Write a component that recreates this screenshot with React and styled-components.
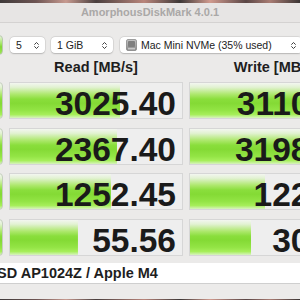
import React from 'react';
import styled, { createGlobalStyle } from 'styled-components';
import { ChevronsUpDown } from 'lucide-react';

const GlobalStyle = createGlobalStyle`
  html, body {
    margin: 0;
    padding: 0;
  }
  body {
    background: #6b4f4a;
    font-family: "Liberation Sans", Arial, sans-serif;
  }
`;

const Screen = styled.div`
  width: 300px;
  height: 300px;
  overflow: hidden;
  display: flex;
  flex-direction: column;
  background: #ebeae9;
`;

const DesktopStrip = styled.div`
  height: ${(p) => p.$h}px;
  flex-shrink: 0;
  background: linear-gradient(90deg, #3f3a3a 0%, #6d5452 12%, #c79a90 22%, #4a3f3e 32%, #b9857b 48%, #3e3837 60%, #d09a8e 70%, #5a4645 82%, #a97c73 90%, #3b3534 100%);
`;

const Window = styled.div`
  width: 440px;
  margin-left: -70px;
  flex: 1;
  display: flex;
  flex-direction: column;
  background: #ebeae9;
`;

const TitleBar = styled.div`
  height: 20px;
  box-sizing: border-box;
  border-bottom: 1px solid #d4d2d1;
  background: #e7e5e4;
  display: flex;
  align-items: center;
  justify-content: center;
  padding-bottom: 2px;
  font-size: 11px;
  font-weight: 700;
  color: #aaa8a7;
`;

const Toolbar = styled.div`
  height: 33px;
  box-sizing: border-box;
  padding: 12px 0 0 10px;
  display: flex;
  align-items: flex-start;
`;

const AllButton = styled.div`
  width: 63px;
  height: 20px;
  box-sizing: border-box;
  border: 1px solid #b9c9ae;
  border-radius: 4px;
  background: linear-gradient(180deg, #e9f5de 0%, #a7e76a 40%, #84d737 60%, #9be851 100%);
  color: #fff;
  font-size: 11px;
  font-weight: 700;
  display: flex;
  align-items: center;
  justify-content: center;
  margin-right: 7px;
`;

const Select = styled.div`
  width: ${(p) => p.$w}px;
  height: 16px;
  margin-top: 2px;
  margin-right: ${(p) => p.$gap || 0}px;
  box-sizing: border-box;
  padding: 0 4px 0 6px;
  background: #fff;
  border-radius: 4px;
  box-shadow: 0 0 0 0.5px rgba(0, 0, 0, 0.1), 0 0.5px 1.5px rgba(0, 0, 0, 0.18);
  display: flex;
  align-items: center;
  font-size: 10.5px;
  color: #222;
`;

const SelectText = styled.span`
  flex: 1;
  display: flex;
  align-items: center;
  gap: 4px;
  white-space: nowrap;
`;

const Columns = styled.div`
  display: grid;
  grid-template-columns: 63px 174px 174px;
  column-gap: 6px;
  padding-left: 10px;
`;

const HeaderRow = styled(Columns)`
  height: 26px;
`;

const HeaderCell = styled.div`
  text-align: center;
  font-size: 14.5px;
  font-weight: 700;
  line-height: 23px;
  color: #1e1e1e;
`;

const Rows = styled(Columns)`
  grid-auto-rows: 37px;
  row-gap: 8.5px;
`;

const barGradient = `linear-gradient(180deg, #f3f6f0 0%, #e2f2d2 12%, #aee86e 32%, #8ade3c 46%, #84da35 58%, #93e445 78%, #a6ee5a 90%, #d8f3c0 100%)`;

const Label = styled.div`
  box-sizing: border-box;
  border: 1px solid #c4cfbd;
  border-radius: 4px;
  background: ${barGradient};
  color: #fff;
  font-size: 11px;
  font-weight: 700;
  line-height: 13px;
  display: flex;
  align-items: center;
  justify-content: center;
  text-align: center;
`;

const Cell = styled.div`
  box-sizing: border-box;
  border: 1px solid #d6d6d6;
  background-color: #eeeeee;
  background-image: ${barGradient};
  background-repeat: no-repeat;
  background-size: ${(p) => p.$fill}% 100%;
  padding: 6px 6px 0 0;
  text-align: right;
  font-size: 33.5px;
  font-weight: 700;
  line-height: 29px;
  color: #1a1a1a;
  white-space: nowrap;
  overflow: hidden;
`;

const Comment = styled.div`
  margin-top: 7.5px;
  height: 21px;
  box-sizing: border-box;
  border-bottom: 1px solid #cfcfcf;
  background: #fff;
  padding-left: 5px;
  display: flex;
  align-items: center;
  font-size: 14.5px;
  font-weight: 700;
  color: #1e1e1e;
  white-space: nowrap;
`;

const Footer = styled.div`
  flex: 1;
  background: #ecebea;
`;

const Chevron = () => <ChevronsUpDown size={9} strokeWidth={2.6} color="#3a3a3a" />;

const DiskIcon = () => (
  <svg width="11" height="12" viewBox="0 0 11 12">
    <defs>
      <linearGradient id="dk" x1="0" y1="0" x2="0" y2="1">
        <stop offset="0" stopColor="#c4c4c4" />
        <stop offset="1" stopColor="#8e8e8e" />
      </linearGradient>
    </defs>
    <rect x="0.5" y="0.5" width="10" height="11" rx="1.5" fill="url(#dk)" stroke="#6f6f6f" strokeWidth="0.6" />
    <rect x="2" y="2" width="7" height="6" rx="1" fill="#7f7f7f" />
    <rect x="2" y="9.3" width="7" height="1" fill="#dcdcdc" />
  </svg>
);

const results = [
  { label: ['SEQ1M', 'Q8T1'], read: '3025.40', readFill: 64, write: '3110.82', writeFill: 64.6 },
  { label: ['SEQ128K', 'Q32T1'], read: '2367.40', readFill: 62.2, write: '3198.55', writeFill: 65 },
  { label: ['RND4K', 'Q32T16'], read: '1252.45', readFill: 58.7, write: '122.61', writeFill: 43.6 },
  { label: ['RND4K', 'Q1T1'], read: '55.56', readFill: 39.5, write: '30.47', writeFill: 35.5 },
];

const App = () => (
  <>
    <GlobalStyle />
    <Screen>
      <DesktopStrip $h={3} />
      <Window>
        <TitleBar>AmorphousDiskMark 4.0.1</TitleBar>
        <Toolbar>
          <AllButton>All</AllButton>
          <Select $w={35} $gap={6}>
            <SelectText>5</SelectText>
            <Chevron />
          </Select>
          <Select $w={62} $gap={7}>
            <SelectText>1 GiB</SelectText>
            <Chevron />
          </Select>
          <Select $w={182}>
            <SelectText>
              <DiskIcon />
              Mac Mini NVMe (35% used)
            </SelectText>
            <Chevron />
          </Select>
        </Toolbar>
        <HeaderRow>
          <HeaderCell />
          <HeaderCell>Read [MB/s]</HeaderCell>
          <HeaderCell>Write [MB/s]</HeaderCell>
        </HeaderRow>
        <Rows>
          {results.map((r) => (
            <React.Fragment key={r.label.join()}>
              <Label>
                {r.label[0]}
                <br />
                {r.label[1]}
              </Label>
              <Cell $fill={r.readFill}>{r.read}</Cell>
              <Cell $fill={r.writeFill}>{r.write}</Cell>
            </React.Fragment>
          ))}
        </Rows>
        <Comment>APPLE SSD AP1024Z / Apple M4</Comment>
        <Footer />
      </Window>
      <DesktopStrip $h={1} />
    </Screen>
  </>
);

export default App;
